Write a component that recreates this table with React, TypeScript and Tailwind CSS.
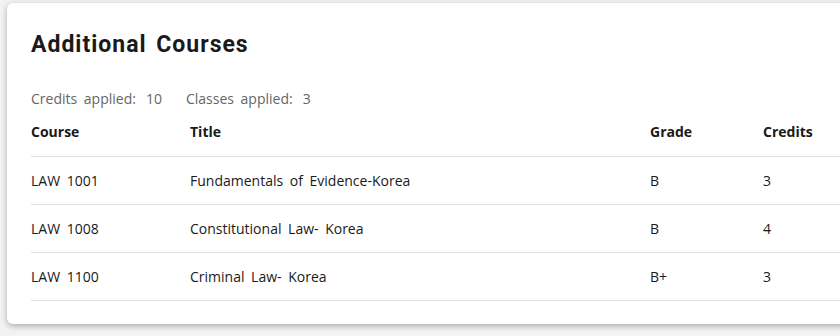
export default function App() {
  const rows = [
    { course: 'LAW 1001', title: 'Fundamentals of Evidence-Korea', grade: 'B', credits: '3' },
    { course: 'LAW 1008', title: 'Constitutional Law- Korea', grade: 'B', credits: '4' },
    { course: 'LAW 1100', title: 'Criminal Law- Korea', grade: 'B+', credits: '3' },
  ]

  return (
    <div className="w-[840px] h-[336px] overflow-hidden bg-[#f3f3f3] pt-[3px] pl-[7px]">
      <div className="w-[880px] h-[321px] bg-white rounded-md shadow-[0_2px_6px_rgba(0,0,0,0.3)] px-6 pt-[28px] [word-spacing:3px]">
        {/* Heading */}
        <h2 className="font-['Roboto'] font-bold text-[23px] leading-[28px] tracking-[1px] text-[#1a1a1a]">
          Additional Courses
        </h2>

        {/* Summary */}
        <div className="mt-[30px] flex gap-6 font-['Open_Sans'] text-sm text-[#666]">
          <span className="flex gap-[10px]"><span>Credits applied:</span><span>10</span></span>
          <span className="flex gap-[10px]"><span>Classes applied:</span><span>3</span></span>
        </div>

        {/* Table */}
        <table className="mt-[5px] w-full font-['Open_Sans'] text-sm text-[#1a1a1a] border-collapse">
          <thead>
            <tr className="border-b border-[#e0e0e0] h-[42px]">
              <th className="w-[159px] text-left font-bold pb-[6px]">Course</th>
              <th className="w-[460px] text-left font-bold pb-[6px]">Title</th>
              <th className="w-[113px] text-left font-bold pb-[6px]">Grade</th>
              <th className="text-left font-bold pb-[6px]">Credits</th>
            </tr>
          </thead>
          <tbody>
            {rows.map(r => (
              <tr key={r.course} className="border-b border-[#e0e0e0] h-[48px]">
                <td className="pt-[2px]">{r.course}</td>
                <td className="pt-[2px]">{r.title}</td>
                <td className="pt-[2px]">{r.grade}</td>
                <td className="pt-[2px]">{r.credits}</td>
              </tr>
            ))}
          </tbody>
        </table>
      </div>
    </div>
  )
}
